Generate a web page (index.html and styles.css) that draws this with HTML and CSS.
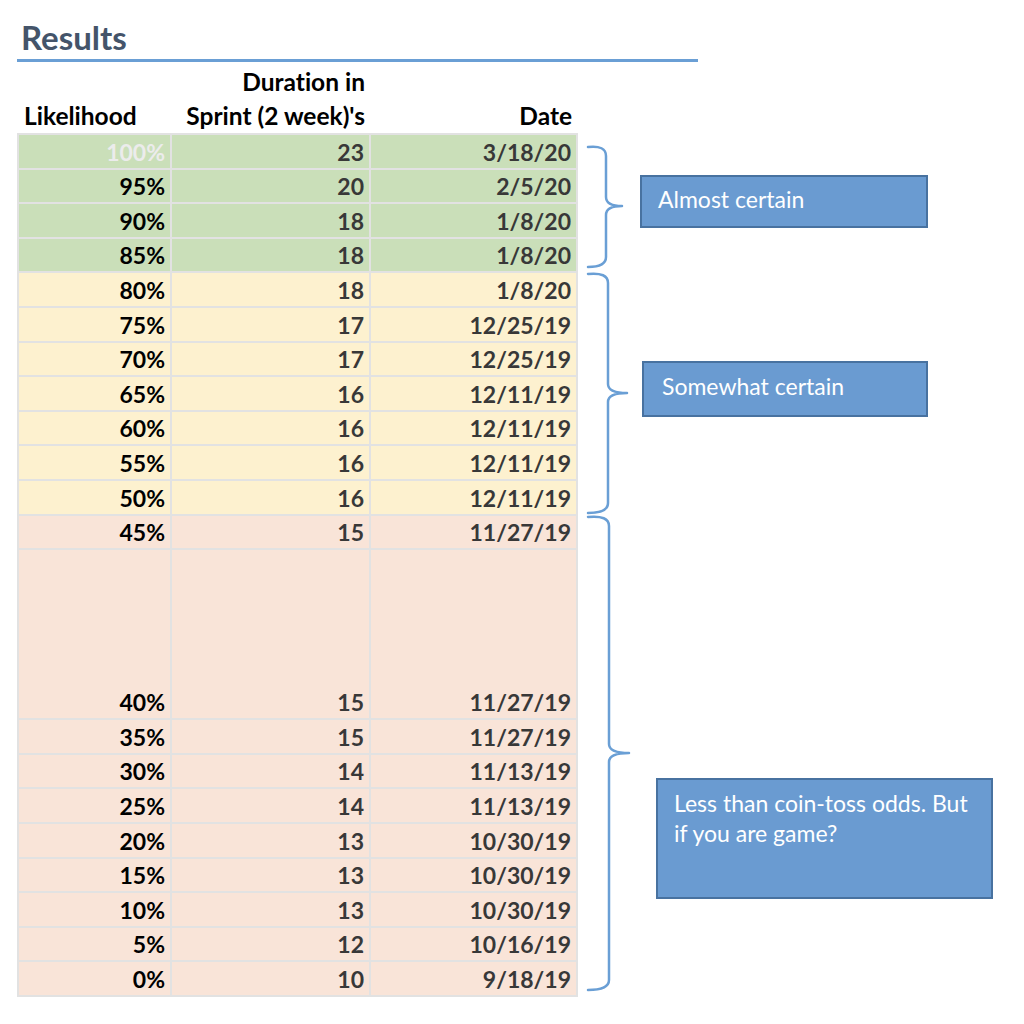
FILE: index.html
```html
<!DOCTYPE html>
<html lang="en">
<head>
<meta charset="utf-8">
<title>Results</title>
<link rel="stylesheet" href="styles.css">
</head>
<body>
<div class="page">
  <h1 class="title">Results</h1>
  <div class="rule"></div>
  <table class="results">
    <colgroup>
      <col class="c-like">
      <col class="c-dur">
      <col class="c-date">
    </colgroup>
    <thead>
      <tr>
        <th class="h-like">Likelihood</th>
        <th class="h-num">Duration in<br>Sprint (2 week)'s</th>
        <th class="h-num">Date</th>
      </tr>
    </thead>
    <tbody>
      <tr class="green"><td class="pct faint">100%</td><td>23</td><td>3/18/20</td></tr>
      <tr class="green"><td class="pct">95%</td><td>20</td><td>2/5/20</td></tr>
      <tr class="green"><td class="pct">90%</td><td>18</td><td>1/8/20</td></tr>
      <tr class="green"><td class="pct">85%</td><td>18</td><td>1/8/20</td></tr>
      <tr class="yellow"><td class="pct">80%</td><td>18</td><td>1/8/20</td></tr>
      <tr class="yellow"><td class="pct">75%</td><td>17</td><td>12/25/19</td></tr>
      <tr class="yellow"><td class="pct">70%</td><td>17</td><td>12/25/19</td></tr>
      <tr class="yellow"><td class="pct">65%</td><td>16</td><td>12/11/19</td></tr>
      <tr class="yellow"><td class="pct">60%</td><td>16</td><td>12/11/19</td></tr>
      <tr class="yellow"><td class="pct">55%</td><td>16</td><td>12/11/19</td></tr>
      <tr class="yellow"><td class="pct">50%</td><td>16</td><td>12/11/19</td></tr>
      <tr class="pink"><td class="pct">45%</td><td>15</td><td>11/27/19</td></tr>
      <tr class="pink tall"><td class="pct">40%</td><td>15</td><td>11/27/19</td></tr>
      <tr class="pink"><td class="pct">35%</td><td>15</td><td>11/27/19</td></tr>
      <tr class="pink"><td class="pct">30%</td><td>14</td><td>11/13/19</td></tr>
      <tr class="pink"><td class="pct">25%</td><td>14</td><td>11/13/19</td></tr>
      <tr class="pink"><td class="pct">20%</td><td>13</td><td>10/30/19</td></tr>
      <tr class="pink"><td class="pct">15%</td><td>13</td><td>10/30/19</td></tr>
      <tr class="pink"><td class="pct">10%</td><td>13</td><td>10/30/19</td></tr>
      <tr class="pink"><td class="pct">5%</td><td>12</td><td>10/16/19</td></tr>
      <tr class="pink"><td class="pct">0%</td><td>10</td><td>9/18/19</td></tr>
    </tbody>
  </table>

  <svg class="braces" width="1024" height="1024" viewBox="0 0 1024 1024" aria-hidden="true">
    <path d="M588 147 Q606 145 606 156 L606 197 Q606 206 622 206 Q606 206 606 215 L606 257 Q606 267 588 267"/>
    <path d="M588 274 Q608 272 608 283 L608 384 Q608 393 627 393 Q608 393 608 402 L608 503 Q608 513 588 513"/>
    <path d="M588 517 Q609 515 609 526 L609 744 Q609 753 629 753 Q609 753 609 762 L609 980 Q609 990 588 990"/>
  </svg>

  <div class="callout callout-1">Almost certain</div>
  <div class="callout callout-2">Somewhat certain</div>
  <div class="callout callout-3">Less than coin-toss odds. But<br>if you are game?</div>
</div>
</body>
</html>
```

FILE: styles.css
```css
html, body {
  margin: 0;
  padding: 0;
  background: #ffffff;
}

.page {
  position: relative;
  width: 1024px;
  height: 1024px;
  padding: 0 0 0 17px;
  box-sizing: border-box;
  font-family: Lato, "Liberation Sans", sans-serif;
  font-variant-ligatures: none;
  font-feature-settings: "liga" 0, "clig" 0;
  overflow: hidden;
}

.title {
  margin: 17px 0 0 4px;
  font-size: 33px;
  line-height: 40px;
  font-weight: 700;
  color: #44546a;
}

.rule {
  width: 681px;
  height: 3px;
  margin-top: 2px;
  background: #6a9fd5;
}

.results {
  border-collapse: collapse;
  table-layout: fixed;
  width: 559px;
  font-size: 23px;
  font-weight: 700;
}

.c-like { width: 153px; }
.c-dur { width: 199px; }
.c-date { width: 207px; }

.results th {
  height: 71px;
  padding: 0 5px 0 5px;
  font-size: 24.5px;
  line-height: 34px;
  vertical-align: bottom;
  color: #000000;
  font-weight: 700;
  text-align: right;
  white-space: nowrap;
}

.results th.h-like {
  text-align: left;
  padding-left: 6px;
}

.results td {
  height: 34.6px;
  padding: 0 5px 0 5px;
  line-height: 32px;
  vertical-align: bottom;
  text-align: right;
  color: #383838;
  border: 2px solid #e2e2e2;
  box-sizing: border-box;
  white-space: nowrap;
}

.results td.pct { color: #000000; }
.results td.faint { color: #ececec; }

.results tr.green td { background: #cadfb9; }
.results tr.yellow td { background: #fdf1cf; }
.results tr.pink td { background: #f9e4d8; }
.results tr.tall td { height: 170px; }

.braces {
  position: absolute;
  left: 0;
  top: 0;
  pointer-events: none;
}

.braces path {
  fill: none;
  stroke: #6a9fd5;
  stroke-width: 2.5;
  stroke-linejoin: round;
  stroke-linecap: round;
}

.callout {
  position: absolute;
  box-sizing: border-box;
  background: #6a9bd1;
  border: 2px solid #4872a0;
  color: #ffffff;
  font-size: 23px;
  font-weight: 400;
  line-height: 30px;
}

.callout-1 {
  left: 640px;
  top: 175px;
  width: 288px;
  height: 53px;
  padding: 7px 0 0 16px;
}

.callout-2 {
  left: 642px;
  top: 361px;
  width: 286px;
  height: 56px;
  padding: 8px 0 0 18px;
}

.callout-3 {
  left: 656px;
  top: 778px;
  width: 337px;
  height: 121px;
  padding: 8px 0 0 16px;
}
```
